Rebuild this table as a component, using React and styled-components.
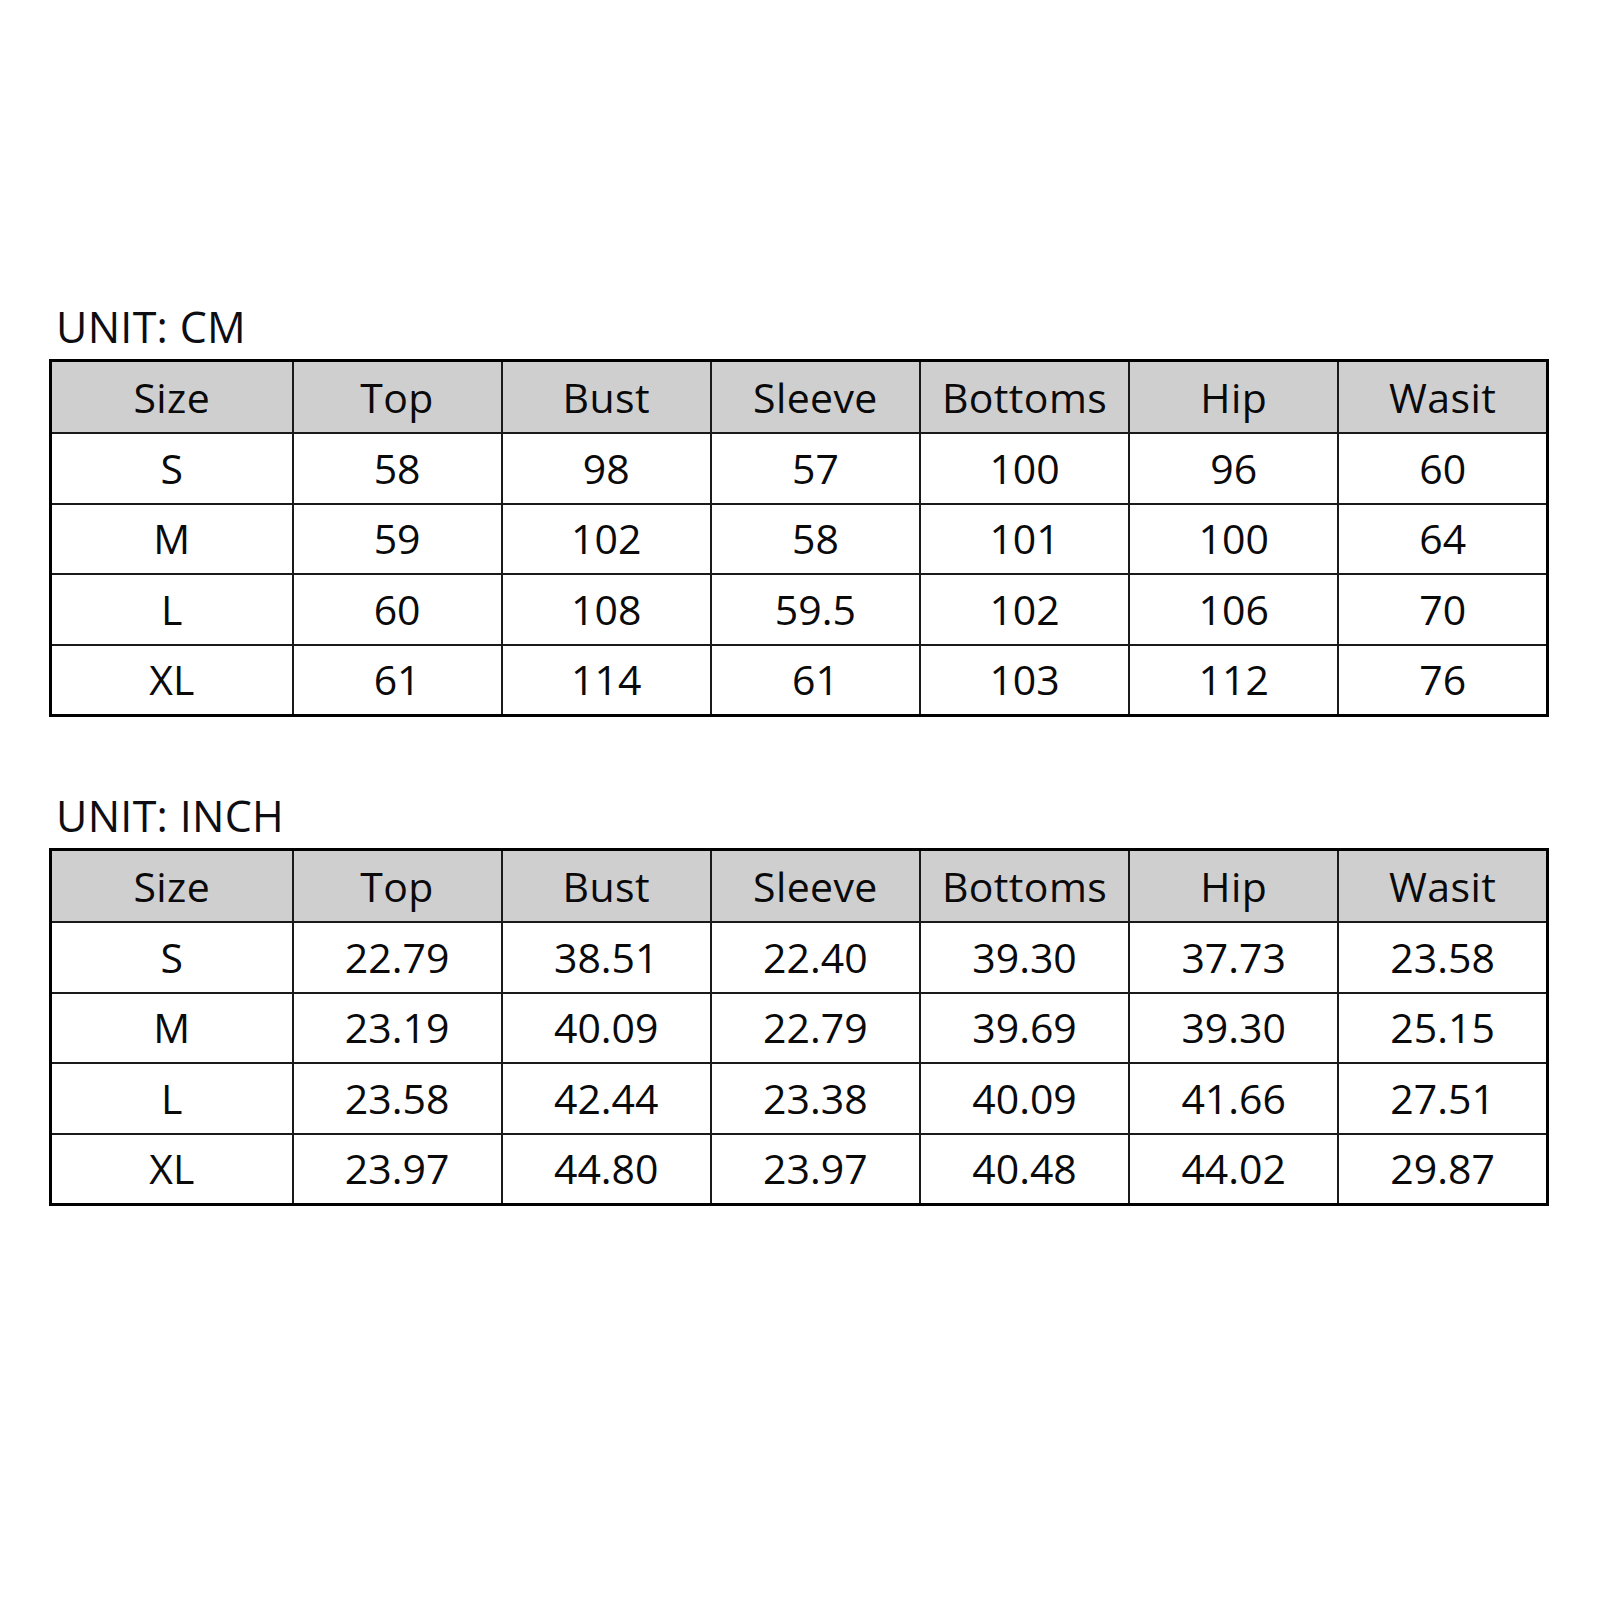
import React from 'react';
import styled, { createGlobalStyle } from 'styled-components';

const GlobalStyle = createGlobalStyle`
  html, body {
    margin: 0;
    padding: 0;
    background: #ffffff;
  }
  body {
    font-family: 'Open Sans', 'Noto Sans', 'Liberation Sans', sans-serif;
    color: #0a0a0a;
  }
`;

const Page = styled.div`
  width: 1600px;
  height: 1600px;
  box-sizing: border-box;
  padding: 303px 0 0 49px;
  display: flex;
  flex-direction: column;
  gap: 75px;
`;

const Section = styled.section`
  display: flex;
  flex-direction: column;
  gap: 8px;
`;

const Unit = styled.div`
  font-size: 43px;
  line-height: 48px;
  height: 48px;
  margin-left: 7px;
  letter-spacing: 0.3px;
  color: #0d0d14;
`;

const Table = styled.table`
  width: 1500px;
  table-layout: fixed;
  border-collapse: collapse;
  border: 3px solid #000000;
`;

const HeadCell = styled.th`
  height: 70px;
  padding: 0;
  background: #d0cfcf;
  border: 2px solid #1a1a1a;
  font-weight: 400;
  font-size: 41px;
  letter-spacing: 0.4px;
  text-align: center;
  vertical-align: middle;
  line-height: 1;
`;

const Cell = styled.td`
  height: 68.5px;
  padding: 0;
  border: 2px solid #1a1a1a;
  font-size: 41px;
  text-align: center;
  vertical-align: middle;
  line-height: 1;
`;

const headers = ['Size', 'Top', 'Bust', 'Sleeve', 'Bottoms', 'Hip', 'Wasit'];

const cm = [
  ['S', '58', '98', '57', '100', '96', '60'],
  ['M', '59', '102', '58', '101', '100', '64'],
  ['L', '60', '108', '59.5', '102', '106', '70'],
  ['XL', '61', '114', '61', '103', '112', '76'],
];

const inch = [
  ['S', '22.79', '38.51', '22.40', '39.30', '37.73', '23.58'],
  ['M', '23.19', '40.09', '22.79', '39.69', '39.30', '25.15'],
  ['L', '23.58', '42.44', '23.38', '40.09', '41.66', '27.51'],
  ['XL', '23.97', '44.80', '23.97', '40.48', '44.02', '29.87'],
];

function SizeTable({ unit, rows }) {
  return (
    <Section>
      <Unit>UNIT: {unit}</Unit>
      <Table>
        <colgroup>
          <col style={{ width: 242 }} />
          {headers.slice(1).map((h) => (
            <col key={h} />
          ))}
        </colgroup>
        <thead>
          <tr>
            {headers.map((h) => (
              <HeadCell key={h}>{h}</HeadCell>
            ))}
          </tr>
        </thead>
        <tbody>
          {rows.map((row) => (
            <tr key={row[0]}>
              {row.map((v, i) => (
                <Cell key={i}>{v}</Cell>
              ))}
            </tr>
          ))}
        </tbody>
      </Table>
    </Section>
  );
}

export default function App() {
  return (
    <>
      <GlobalStyle />
      <Page>
        <SizeTable unit="CM" rows={cm} />
        <SizeTable unit="INCH" rows={inch} />
      </Page>
    </>
  );
}
